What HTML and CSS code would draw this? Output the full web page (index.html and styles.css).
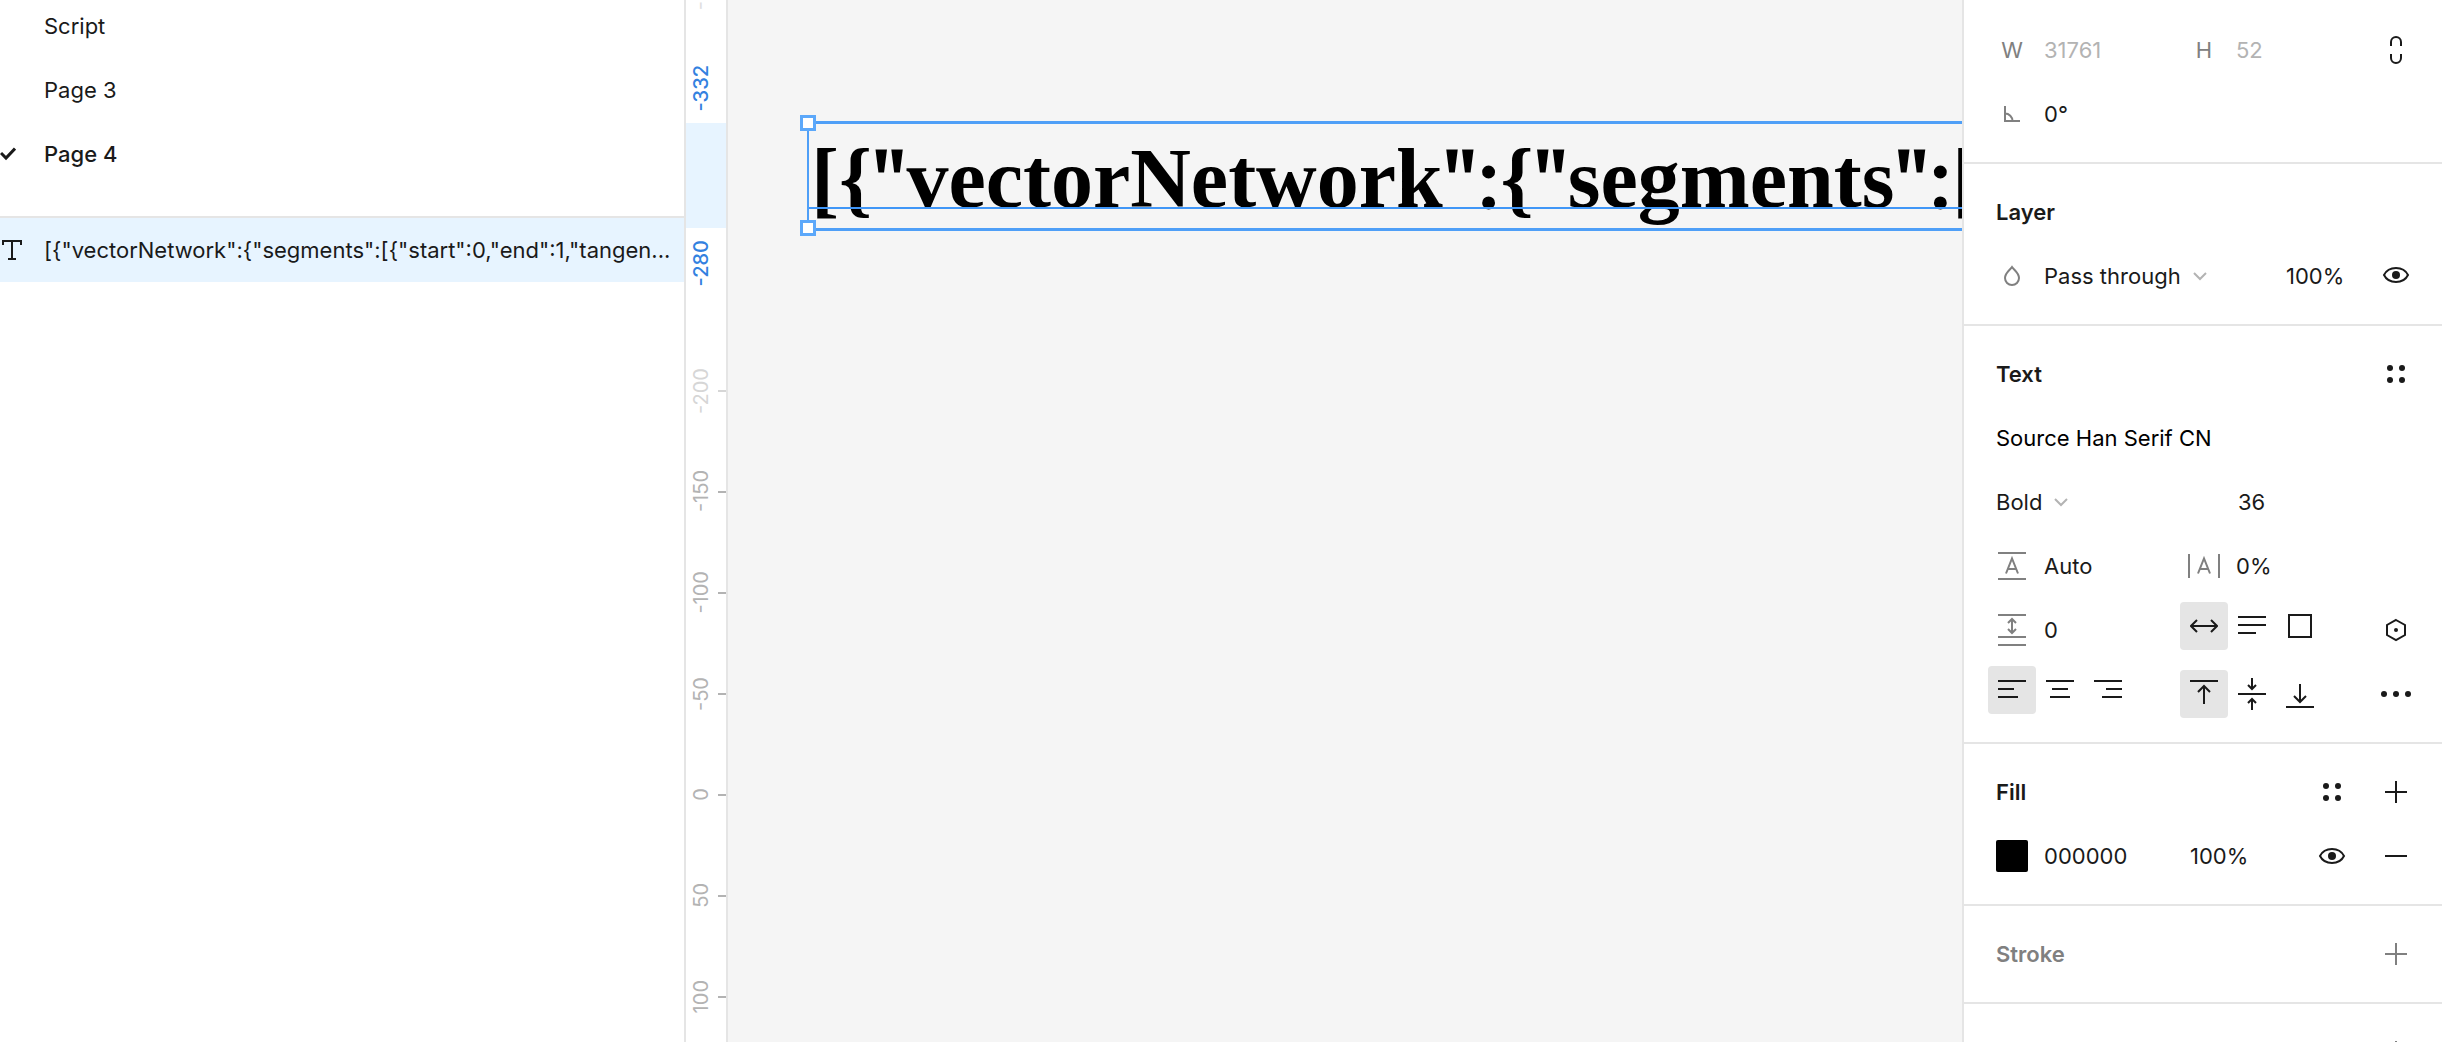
FILE: index.html
```html
<!DOCTYPE html>
<html lang="en">
<head>
<meta charset="utf-8">
<title>Page 4</title>
<link rel="stylesheet" href="styles.css">
</head>
<body>
<div class="app">
  <aside class="sidebar">
    <nav class="pages">
      <a class="page" href="#script"><span class="page-mark"></span>Script</a>
      <a class="page" href="#page-3"><span class="page-mark"></span>Page 3</a>
      <a class="page page-current" href="#page-4"><span class="page-mark"><svg width="16" height="16" viewBox="0 0 16 16"><path d="M1 7l5 5L15 2.500" stroke-width="3"/></svg></span>Page 4</a>
    </nav>
    <div class="layers">
      <a class="layer" href="#layer"><span class="layer-mark"><svg width="20" height="20" viewBox="0 0 20 20"><path d="M1 5V1h18v4M10 1v18M6 19h8"/></svg></span><span class="layer-name">[{"vectorNetwork":{"segments":[{"start":0,"end":1,"tangen...</span></a>
    </div>
  </aside>

  <div class="ruler">
    <div class="ruler-head">
      <div class="tick tick-clipped"><span class="tick-label">-400</span></div>
      <span class="bound-label">-332</span>
    </div>
    <div class="ruler-range"></div>
    <div class="ruler-tail"><span class="bound-label">-280</span></div>
    <div class="tick tick-faint"><span class="tick-label">-200</span></div>
    <div class="tick"><span class="tick-label">-150</span></div>
    <div class="tick"><span class="tick-label">-100</span></div>
    <div class="tick"><span class="tick-label">-50</span></div>
    <div class="tick"><span class="tick-label">0</span></div>
    <div class="tick"><span class="tick-label">50</span></div>
    <div class="tick"><span class="tick-label">100</span></div>
  </div>

  <main class="canvas">
    <div class="text-node">
      <span class="text-content">[{<span class="mark">"</span>vectorNetwork<span class="mark">":</span>{<span class="mark">"</span>segments<span class="mark">":</span>[</span>
      <span class="baseline"></span>
      <span class="handle handle-top"></span>
      <span class="handle handle-bottom"></span>
    </div>
  </main>

  <aside class="inspector">
    <section class="section section-first">
      <div class="row">
        <label class="glyph" for="w">W</label><input class="field muted" id="w" value="31761">
        <label class="glyph" for="h">H</label><input class="field muted" id="h" value="52">
        <button class="tool tool-end" aria-label="Constrain proportions"><svg width="14" height="28" viewBox="0 0 14 28"><path d="M2 10V6a5 5 0 0 1 10 0v4M2 18v4a5 5 0 0 0 10 0v-4"/></svg></button>
      </div>
      <div class="row">
        <label class="glyph" for="angle" aria-label="Rotation"><svg width="18" height="18" viewBox="0 0 18 18"><path d="M2 1v15h15M2 8.500a7.500 7.500 0 0 1 7.500 7.500"/></svg></label><input class="field" id="angle" value="0°">
      </div>
    </section>

    <section class="section">
      <div class="row"><h2 class="title">Layer</h2></div>
      <div class="row row-blend">
        <span class="glyph"><svg width="18" height="22" viewBox="0 0 18 22"><path d="M9 2C7 5 2 8 2 13a7 7 0 0 0 14 0C16 8 11 5 9 2z"/></svg></span>
        <button class="drop">Pass through<svg class="chevron" width="14" height="9" viewBox="0 0 14 9"><path d="M1 1l6 6 6-6"/></svg></button>
        <input class="field field-inset" aria-label="Layer opacity" value="100%">
        <button class="tool tool-up" aria-label="Toggle visibility"><svg width="28" height="18" viewBox="0 0 28 18"><path d="M2 9C4 5 8.500 2 14 2s10 3 12 7c-2 4-6.500 7-12 7S4 13 2 9z"/><circle class="solid" cx="14" cy="9" r="4"/></svg></button>
      </div>
    </section>

    <section class="section">
      <div class="row"><h2 class="title">Text</h2><button class="tool tool-end" aria-label="Text styles"><svg width="18" height="18" viewBox="0 0 18 18"><g class="solid"><circle cx="3" cy="3" r="3"/><circle cx="15" cy="3" r="3"/><circle cx="3" cy="15" r="3"/><circle cx="15" cy="15" r="3"/></g></svg></button></div>
      <div class="row"><input class="field field-font" aria-label="Font family" value="Source Han Serif CN"></div>
      <div class="row">
        <button class="drop drop-style">Bold<svg class="chevron" width="14" height="9" viewBox="0 0 14 9"><path d="M1 1l6 6 6-6"/></svg></button>
        <input class="field field-size field-inset" aria-label="Font size" value="36">
      </div>
      <div class="row">
        <label class="glyph" for="leading" aria-label="Line height"><svg width="28" height="28" viewBox="0 0 28 28"><path d="M0 1h28M0 27h28M8 21.500l6-15 6 15M10 17h8"/></svg></label><input class="field" id="leading" value="Auto">
        <label class="glyph" for="tracking" aria-label="Letter spacing"><svg width="32" height="28" viewBox="0 0 32 28"><path d="M1 2v24M31 2v24M10 21.500l6-15 6 15M12 17h8"/></svg></label><input class="field" id="tracking" value="0%">
      </div>
      <div class="row">
        <label class="glyph" for="paragraph" aria-label="Paragraph spacing"><svg width="28" height="32" viewBox="0 0 28 32"><path d="M0 1h28M0 23h28M0 31h28M14 5v14M10 9l4-4 4 4M10 15l4 4 4-4"/></svg></label><input class="field" id="paragraph" value="0">
        <div class="group group-right group-raised">
          <button class="option option-on" aria-label="Auto width"><svg width="28" height="28" viewBox="0 0 28 28"><path d="M2 14h24M7 8l-6 6 6 6M21 8l6 6-6 6"/></svg></button>
          <button class="option" aria-label="Auto height"><svg width="28" height="28" viewBox="0 0 28 28"><path d="M0 5h28M0 13h28M0 21h18"/></svg></button>
          <button class="option" aria-label="Fixed size"><svg width="28" height="28" viewBox="0 0 28 28"><path d="M3 3h22v22H3z"/></svg></button>
        </div>
        <button class="tool tool-end" aria-label="Variable"><svg width="22" height="24" viewBox="0 0 22 24"><path d="M11 2l9 5v10l-9 5-9-5V7z"/><circle class="solid" cx="11" cy="12" r="2"/></svg></button>
      </div>
      <div class="row">
        <div class="group group-left group-raised">
          <button class="option option-on" aria-label="Align left"><svg width="28" height="28" viewBox="0 0 28 28"><path d="M0 5h28M0 13h16M0 21h20"/></svg></button>
          <button class="option" aria-label="Align center"><svg width="28" height="28" viewBox="0 0 28 28"><path d="M0 5h28M6 13h16M4 21h20"/></svg></button>
          <button class="option" aria-label="Align right"><svg width="28" height="28" viewBox="0 0 28 28"><path d="M0 5h28M12 13h16M8 21h20"/></svg></button>
        </div>
        <div class="group group-right">
          <button class="option option-on" aria-label="Align top"><svg width="28" height="32" viewBox="0 0 28 32"><path d="M0 3h28M14 26V8M8 14l6-6 6 6"/></svg></button>
          <button class="option" aria-label="Align middle"><svg width="28" height="32" viewBox="0 0 28 32"><path d="M0 16h28M14 0v11M10 7l4 4 4-4M14 32V21M10 25l4-4 4 4"/></svg></button>
          <button class="option" aria-label="Align bottom"><svg width="28" height="32" viewBox="0 0 28 32"><path d="M0 29h28M14 6v18M8 18l6 6 6-6"/></svg></button>
        </div>
        <button class="tool tool-end" aria-label="Type settings"><svg width="30" height="6" viewBox="0 0 30 6"><g class="solid"><circle cx="3" cy="3" r="3"/><circle cx="15" cy="3" r="3"/><circle cx="27" cy="3" r="3"/></g></svg></button>
      </div>
    </section>

    <section class="section">
      <div class="row"><h2 class="title">Fill</h2>
        <button class="tool tool-mid" aria-label="Fill styles"><svg width="18" height="18" viewBox="0 0 18 18"><g class="solid"><circle cx="3" cy="3" r="3"/><circle cx="15" cy="3" r="3"/><circle cx="3" cy="15" r="3"/><circle cx="15" cy="15" r="3"/></g></svg></button>
        <button class="tool tool-end" aria-label="Add fill"><svg width="22" height="22" viewBox="0 0 22 22"><path d="M11 0v22M0 11h22"/></svg></button>
      </div>
      <div class="row">
        <button class="swatch" aria-label="Fill colour"></button>
        <input class="field" aria-label="Fill hex" value="000000">
        <input class="field field-opacity field-inset" aria-label="Fill opacity" value="100%">
        <button class="tool tool-mid" aria-label="Toggle fill"><svg width="28" height="18" viewBox="0 0 28 18"><path d="M2 9C4 5 8.500 2 14 2s10 3 12 7c-2 4-6.500 7-12 7S4 13 2 9z"/><circle class="solid" cx="14" cy="9" r="4"/></svg></button>
        <button class="tool tool-end" aria-label="Remove fill"><svg width="22" height="22" viewBox="0 0 22 22"><path d="M0 11h22"/></svg></button>
      </div>
    </section>

    <section class="section section-empty">
      <div class="row"><h2 class="title">Stroke</h2>
        <button class="tool tool-end" aria-label="Add stroke"><svg width="22" height="22" viewBox="0 0 22 22"><path d="M11 0v22M0 11h22"/></svg></button>
      </div>
    </section>

    <section class="section section-empty">
      <div class="row">
        <button class="tool tool-end" aria-label="Add effect"><svg width="22" height="22" viewBox="0 0 22 22"><path d="M11 0v22M0 11h22"/></svg></button>
      </div>
    </section>
  </aside>
</div>
</body>
</html>
```
FILE: styles.css
```css
* { box-sizing: border-box; }

body {
  margin: 0;
  font-family: Inter, "Liberation Sans", sans-serif;
  font-size: 22px;
  line-height: 32px;
  color: #1a1a1a;
  background: #fff;
}

svg { display: block; fill: none; stroke: currentColor; stroke-width: 2; flex: none; }
.solid { fill: currentColor; stroke: none; }

.app {
  display: grid;
  grid-template-columns: 686px 42px 1fr 480px;
  height: 100vh;
  overflow: hidden;
}

/* Pages and layers */
.sidebar { border-right: 2px solid #e5e5e5; }
.pages { padding-bottom: 30px; border-bottom: 2px solid #e5e5e5; }
.page, .layer {
  display: flex;
  align-items: center;
  height: 64px;
  color: inherit;
  text-decoration: none;
}
.page:first-child { margin-top: -6px; }
.page-mark, .layer-mark { flex: none; width: 44px; }
.page-current { font-weight: 500; }
.layer { padding-right: 8px; background: #e7f4ff; }
.layer-mark { padding-left: 2px; }
.layer-name { overflow: hidden; white-space: nowrap; text-overflow: ellipsis; }

/* Vertical ruler */
.ruler {
  display: flex;
  flex-direction: column;
  overflow: hidden;
  border-right: 2px solid #e5e5e5;
  font-size: 20px;
  line-height: 24px;
  color: #b3b3b3;
}
.ruler > * { flex: none; }
.ruler-head {
  display: flex;
  flex-direction: column;
  justify-content: space-between;
  height: 123px;
  padding-bottom: 12px;
}
.ruler-range { height: 105px; background: #e7f4ff; }
.ruler-tail { height: 112px; padding-top: 12px; }
.bound-label, .tick-label { writing-mode: vertical-rl; transform: rotate(180deg); }
.bound-label { display: block; width: 24px; margin-left: 3px; font-weight: 500; color: #3381e0; }
.tick {
  display: flex;
  align-items: center;
  justify-content: space-between;
  height: 101px;
  padding-left: 3px;
}
.tick::after { content: ""; width: 8px; height: 2px; background: currentColor; }
.tick-faint { color: #d6d6d6; }
.tick-clipped { margin-top: -64px; color: #e0e0e0; }

/* Canvas */
.canvas { position: relative; overflow: hidden; background: #f5f5f5; }
.text-node {
  position: absolute;
  left: 79px;
  top: 121px;
  width: 31761px;
  height: 110px;
  border: 3px solid #4f9ff7;
  border-left-width: 2px;
}
.text-content {
  display: block;
  padding-left: 2px;
  font: bold 84px/110px "Liberation Serif", serif;
  color: #000;
  white-space: nowrap;
}
.mark { font-weight: 400; -webkit-text-stroke: 3px #000; }
.baseline { position: absolute; left: 0; right: 0; top: 83px; height: 2px; background: #4096f7; }
.handle {
  position: absolute;
  left: -9px;
  width: 16px;
  height: 16px;
  border: 3px solid #5ca8fa;
  background: #fff;
}
.handle-top { top: -9px; }
.handle-bottom { bottom: -8px; }

/* Inspector */
.inspector { border-left: 2px solid #e5e5e5; overflow: hidden; }
.section { padding: 16px 14px 16px 32px; border-bottom: 2px solid #e5e5e5; }
.section-first { padding-top: 18px; }
.section-empty { color: #808080; }
.row {
  display: grid;
  grid-template-columns: 48px 144px 48px 64px 64px 64px;
  align-items: center;
  height: 64px;
}
.row-blend { grid-template-columns: 48px 240px 80px 64px; }
.title { grid-column: 1 / 4; margin: 0; font-size: 22px; font-weight: 600; }

.glyph { display: flex; justify-content: center; width: 32px; color: #808080; }
.field {
  width: 100%;
  height: 32px;
  padding: 0;
  border: 0;
  background: none;
  font: inherit;
  color: inherit;
}
.field-inset { padding-left: 2px; }
.muted { color: #b3b3b3; }
.field-font { grid-column: 1 / 5; color: #000; }
.field-size { grid-column: 4; }
.field-opacity { grid-column: 3 / 5; }

button { padding: 0; border: 0; background: none; font: inherit; color: inherit; }
.drop { display: flex; align-items: center; gap: 12px; text-align: left; white-space: nowrap; }
.drop-style { grid-column: 1 / 3; }
.chevron { color: #b3b3b3; }
.tool { display: flex; align-items: center; justify-content: center; height: 48px; }
.tool-mid { grid-column: 5; }
.tool-end { grid-column: 6; }
.tool-up { padding-bottom: 2px; }
.swatch { width: 32px; height: 32px; border-radius: 2px; background: #000; }

.group { display: flex; }
.group-left { grid-column: 1 / 3; margin-left: -8px; }
.group-right { grid-column: 3 / 6; margin-left: -8px; }
.group-raised { align-self: start; margin-top: 4px; }
.option {
  display: flex;
  align-items: center;
  justify-content: center;
  width: 48px;
  height: 48px;
  border-radius: 4px;
}
.option-on { background: #e5e5e5; }
```
